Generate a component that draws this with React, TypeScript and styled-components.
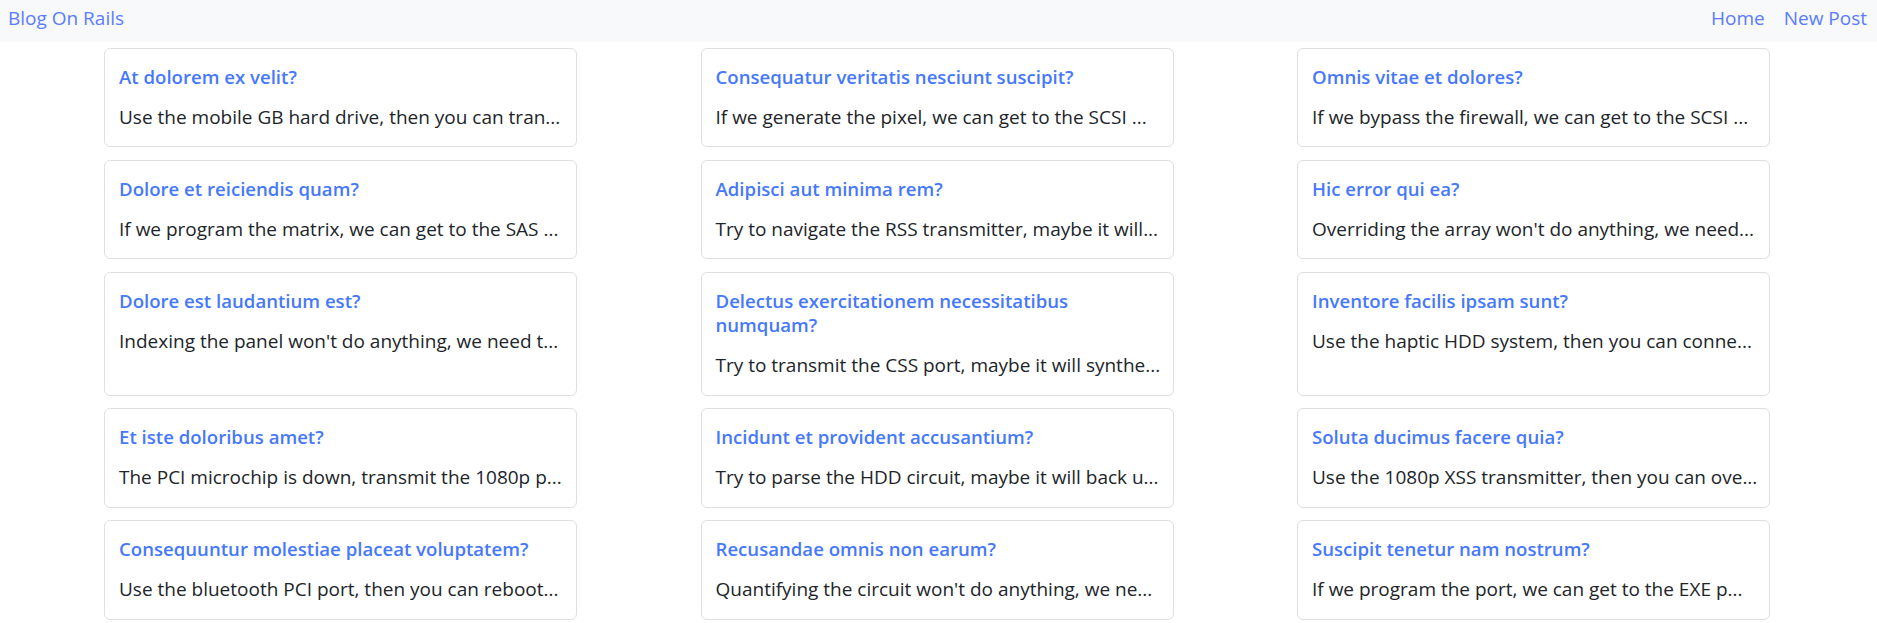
import React from "react";
import styled, { createGlobalStyle } from "styled-components";

const GlobalStyle = createGlobalStyle`
  html, body {
    margin: 0;
    padding: 0;
    background: #ffffff;
  }
  body {
    font-family: "Open Sans", "Noto Sans", "Liberation Sans", sans-serif;
    color: #212529;
    -webkit-font-smoothing: antialiased;
  }
  * { box-sizing: border-box; }
`;

const NavBar = styled.nav`
  height: 42px;
  background: #f8f9fa;
  display: flex;
  align-items: flex-start;
  justify-content: space-between;
  padding: 4px 10px 0 8px;
  font-size: 19px;
  line-height: 1.5;
`;

const Brand = styled.a`
  color: #5a7cfd;
  text-decoration: none;
`;

const NavLinks = styled.div`
  display: flex;
  gap: 19px;
`;

const NavLink = styled.a`
  color: #5a7cfd;
  text-decoration: none;
`;

const Main = styled.main`
  padding: 6px 0 0 104px;
`;

const Grid = styled.div`
  display: grid;
  grid-template-columns: repeat(3, 473px);
  column-gap: 123.5px;
  row-gap: 12.8px;
`;

const Card = styled.article`
  border: 1px solid #dfdfdf;
  border-radius: 6px;
  background: #fff;
  padding: 15.5px 14px 15px 14px;
`;

const Title = styled.h5`
  margin: 0 0 13.8px;
  font-size: 18.6px;
  font-weight: 600;
  line-height: 24.4px;
  color: #4678fb;
`;

const Excerpt = styled.p`
  margin: 0;
  font-size: 19px;
  line-height: 1.5;
  color: #212529;
  white-space: nowrap;
`;

const posts: { title: string; excerpt: string }[] = [
  { title: "At dolorem ex velit?", excerpt: "Use the mobile GB hard drive, then you can tran..." },
  { title: "Consequatur veritatis nesciunt suscipit?", excerpt: "If we generate the pixel, we can get to the SCSI ..." },
  { title: "Omnis vitae et dolores?", excerpt: "If we bypass the firewall, we can get to the SCSI ..." },
  { title: "Dolore et reiciendis quam?", excerpt: "If we program the matrix, we can get to the SAS ..." },
  { title: "Adipisci aut minima rem?", excerpt: "Try to navigate the RSS transmitter, maybe it will..." },
  { title: "Hic error qui ea?", excerpt: "Overriding the array won't do anything, we need..." },
  { title: "Dolore est laudantium est?", excerpt: "Indexing the panel won't do anything, we need t..." },
  { title: "Delectus exercitationem necessitatibus numquam?", excerpt: "Try to transmit the CSS port, maybe it will synthe..." },
  { title: "Inventore facilis ipsam sunt?", excerpt: "Use the haptic HDD system, then you can conne..." },
  { title: "Et iste doloribus amet?", excerpt: "The PCI microchip is down, transmit the 1080p p..." },
  { title: "Incidunt et provident accusantium?", excerpt: "Try to parse the HDD circuit, maybe it will back u..." },
  { title: "Soluta ducimus facere quia?", excerpt: "Use the 1080p XSS transmitter, then you can ove..." },
  { title: "Consequuntur molestiae placeat voluptatem?", excerpt: "Use the bluetooth PCI port, then you can reboot..." },
  { title: "Recusandae omnis non earum?", excerpt: "Quantifying the circuit won't do anything, we ne..." },
  { title: "Suscipit tenetur nam nostrum?", excerpt: "If we program the port, we can get to the EXE p..." },
];

export default function App() {
  return (
    <>
      <GlobalStyle />
      <NavBar>
        <Brand href="#">Blog On Rails</Brand>
        <NavLinks>
          <NavLink href="#">Home</NavLink>
          <NavLink href="#">New Post</NavLink>
        </NavLinks>
      </NavBar>
      <Main>
        <Grid>
          {posts.map((p) => (
            <Card key={p.title}>
              <Title>{p.title}</Title>
              <Excerpt>{p.excerpt}</Excerpt>
            </Card>
          ))}
        </Grid>
      </Main>
    </>
  );
}
